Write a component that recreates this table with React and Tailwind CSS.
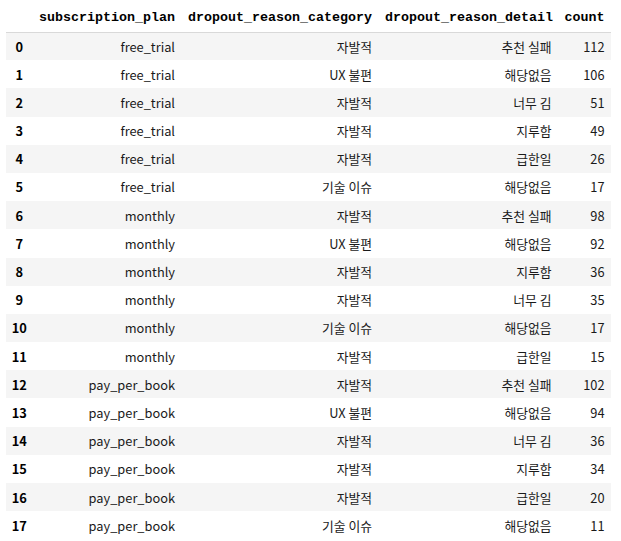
import React from 'react'

const rows = [
  ['free_trial', '자발적', '추천 실패', 112],
  ['free_trial', 'UX 불편', '해당없음', 106],
  ['free_trial', '자발적', '너무 김', 51],
  ['free_trial', '자발적', '지루함', 49],
  ['free_trial', '자발적', '급한일', 26],
  ['free_trial', '기술 이슈', '해당없음', 17],
  ['monthly', '자발적', '추천 실패', 98],
  ['monthly', 'UX 불편', '해당없음', 92],
  ['monthly', '자발적', '지루함', 36],
  ['monthly', '자발적', '너무 김', 35],
  ['monthly', '기술 이슈', '해당없음', 17],
  ['monthly', '자발적', '급한일', 15],
  ['pay_per_book', '자발적', '추천 실패', 102],
  ['pay_per_book', 'UX 불편', '해당없음', 94],
  ['pay_per_book', '자발적', '너무 김', 36],
  ['pay_per_book', '자발적', '지루함', 34],
  ['pay_per_book', '자발적', '급한일', 20],
  ['pay_per_book', '기술 이슈', '해당없음', 11],
]

const mono = "font-['Liberation_Mono','DejaVu_Sans_Mono',monospace]"

export default function App() {
  return (
    <div className="bg-white w-[621px] h-[541px] overflow-hidden pl-[6px] font-['Noto_Sans_CJK_KR',sans-serif] text-[12.8px] text-[#1a1a1a]">
      <table className="table-fixed border-collapse w-[605px]">
        <colgroup>
          <col className="w-[26.5px]" />
          <col className="w-[149px]" />
          <col className="w-[197px]" />
          <col className="w-[179.5px]" />
          <col className="w-[53px]" />
        </colgroup>
        <thead>
          <tr className={`h-[32px] border-b border-[#d9d9d9] ${mono} text-[13.33px] font-bold text-black`}>
            <th></th>
            <th className="text-right px-[6.5px] pt-[5px] pb-0 whitespace-nowrap">subscription_plan</th>
            <th className="text-right px-[6.5px] pt-[5px] pb-0 whitespace-nowrap">dropout_reason_category</th>
            <th className="text-right px-[6.5px] pt-[5px] pb-0 whitespace-nowrap">dropout_reason_detail</th>
            <th className="text-right px-[6.5px] pt-[5px] pb-0 whitespace-nowrap">count</th>
          </tr>
        </thead>
        <tbody>
          {rows.map((r, i) => (
            <tr key={i} className={`h-[28.2px] ${i % 2 === 0 ? 'bg-[#f5f5f5]' : 'bg-white'}`}>
              <td className="text-center font-bold text-black p-0">{i}</td>
              <td className="text-right px-[6.5px] py-0">{r[0]}</td>
              <td className="text-right px-[6.5px] py-0">{r[1]}</td>
              <td className="text-right px-[6.5px] py-0">{r[2]}</td>
              <td className="text-right px-[6.5px] py-0">{r[3]}</td>
            </tr>
          ))}
        </tbody>
      </table>
    </div>
  )
}
